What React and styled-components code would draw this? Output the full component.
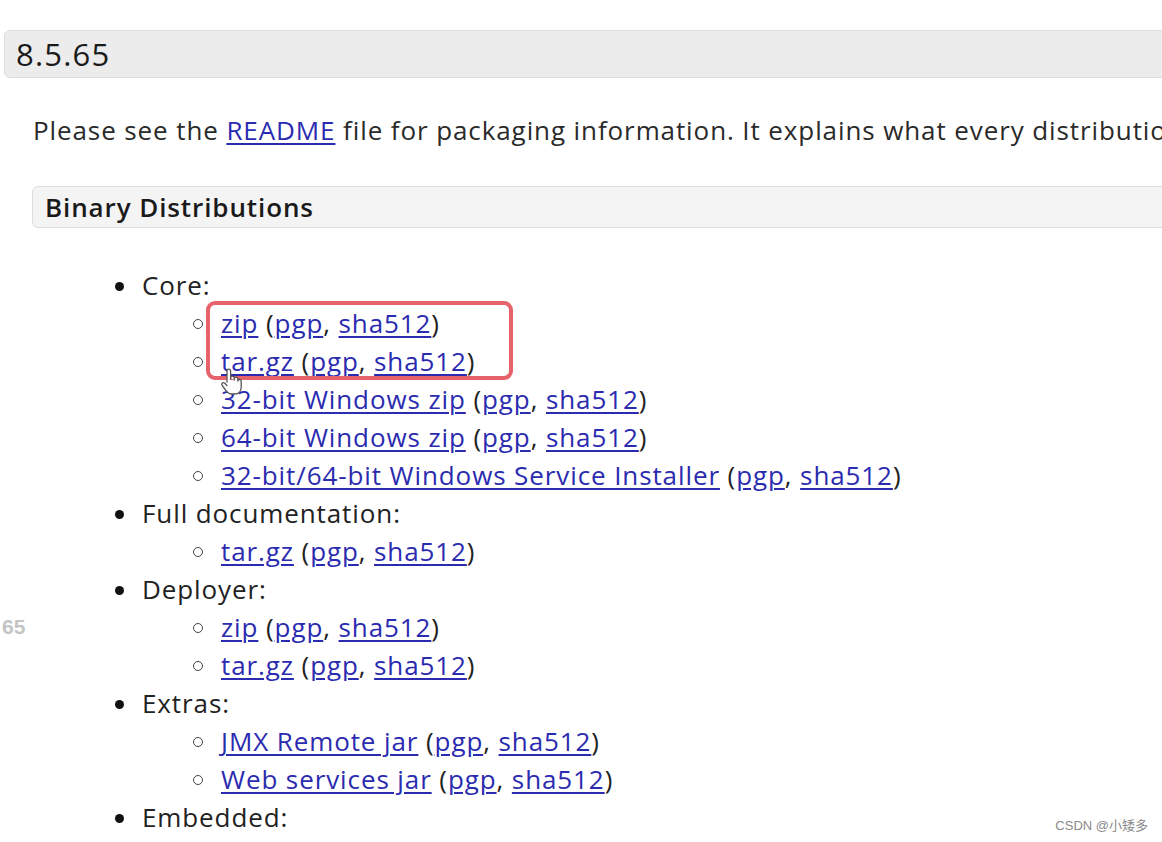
import styled, { createGlobalStyle } from "styled-components";

const GlobalStyle = createGlobalStyle`
  html, body {
    margin: 0;
    padding: 0;
    background: #fff;
    overflow: hidden;
  }
  body {
    font-family: "Open Sans", "Noto Sans", sans-serif;
    color: #222;
  }
`;

const sections = [
  {
    title: "Core:",
    items: [
      { label: "zip" },
      { label: "tar.gz" },
      { label: "32-bit Windows zip" },
      { label: "64-bit Windows zip" },
      { label: "32-bit/64-bit Windows Service Installer" },
    ],
  },
  { title: "Full documentation:", items: [{ label: "tar.gz" }] },
  { title: "Deployer:", items: [{ label: "zip" }, { label: "tar.gz" }] },
  {
    title: "Extras:",
    items: [{ label: "JMX Remote jar" }, { label: "Web services jar" }],
  },
  { title: "Embedded:", items: [] },
];

const HandCursor = () => (
  <svg width="24" height="30" viewBox="0 0 24 30">
    <path
      d="M7 16 V5 a1.8 1.8 0 0 1 3.6 0 V13 M10.6 12 a1.8 1.8 0 0 1 3.6 0 V14 M14.2 13 a1.8 1.8 0 0 1 3.6 0 V15 M17.8 14.5 a1.8 1.8 0 0 1 3.4 0.5 V21 c0 4 -2.5 7 -6.5 7 h-3 c-2.5 0 -4 -1.2 -5.5 -3.2 L2.2 19.5 a1.7 1.7 0 0 1 2.6 -2.2 L7 19.5"
      fill="#fff"
      stroke="#555"
      strokeWidth="1.3"
      strokeLinejoin="round"
      strokeLinecap="round"
    />
  </svg>
);

const App = () => {
  return (
    <>
      <GlobalStyle />
      <Page>
        <VersionBar>8.5.65</VersionBar>
        <Intro>
          Please see the <Link>README</Link> file for packaging information. It
          explains what every distribution contains.
        </Intro>
        <SectionBar>Binary Distributions</SectionBar>
        <List>
          {sections.map((s) => (
            <li key={s.title}>
              <Row $level={1}>
                <Bullet $level={1} />
                <span>{s.title}</span>
              </Row>
              {s.items.map((it, i) => (
                <Row $level={2} key={i}>
                  <Bullet $level={2} />
                  <span>
                    <Link>{it.label}</Link> (<Link>pgp</Link>,{" "}
                    <Link>sha512</Link>)
                  </span>
                </Row>
              ))}
            </li>
          ))}
        </List>
        <Highlight />
        <Cursor>
          <HandCursor />
        </Cursor>
        <SideNumber>65</SideNumber>
        <Watermark>CSDN @小矮多</Watermark>
      </Page>
    </>
  );
};

const Page = styled.div`
  position: relative;
  width: 1162px;
  height: 842px;
  overflow: hidden;
  padding-top: 30px;
  box-sizing: border-box;
  letter-spacing: 0.9px;
`;

const VersionBar = styled.div`
  margin-left: 4px;
  margin-right: -20px;
  height: 48px;
  box-sizing: border-box;
  display: flex;
  align-items: center;
  padding-left: 11px;
  background: #ececec;
  border: 1px solid #dcdcdc;
  border-radius: 6px;
  font-size: 31px;
  font-weight: 500;
  letter-spacing: 1.2px;
  color: #1a1a1a;
`;

const Intro = styled.p`
  margin: 0;
  margin-top: 32px;
  padding-left: 33px;
  font-size: 26px;
  line-height: 40px;
  white-space: nowrap;
  color: #2a2a2a;
`;

const Link = styled.a`
  color: #2b2bb0;
  text-decoration: underline;
  text-decoration-thickness: 1.5px;
  text-underline-offset: 3px;
  cursor: pointer;
`;

const SectionBar = styled.div`
  margin-top: 36px;
  margin-left: 32px;
  margin-right: -20px;
  height: 42px;
  box-sizing: border-box;
  display: flex;
  align-items: center;
  padding-left: 12px;
  background: #f4f4f4;
  border: 1px solid #dcdcdc;
  border-radius: 6px;
  font-size: 26px;
  font-weight: 600;
  color: #1a1a1a;
`;

const List = styled.ul`
  list-style: none;
  margin: 38px 0 0;
  padding: 0;
`;

const Row = styled.div`
  display: flex;
  align-items: center;
  height: 38px;
  gap: 18px;
  padding-left: ${(p) => (p.$level === 1 ? "115px" : "193px")};
  font-size: 26px;
  white-space: nowrap;
  color: #222;
`;

const Bullet = styled.span`
  flex: none;
  box-sizing: border-box;
  width: ${(p) => (p.$level === 1 ? "9px" : "10px")};
  height: ${(p) => (p.$level === 1 ? "9px" : "10px")};
  border-radius: 50%;
  background: ${(p) => (p.$level === 1 ? "#111" : "transparent")};
  border: ${(p) => (p.$level === 1 ? "none" : "1.5px solid #444")};
  margin-top: 2px;
`;

const Highlight = styled.div`
  position: absolute;
  left: 206px;
  top: 301px;
  width: 307px;
  height: 79px;
  box-sizing: border-box;
  border: 4px solid #e6636b;
  border-radius: 9px;
  pointer-events: none;
`;

const Cursor = styled.div`
  position: absolute;
  left: 220px;
  top: 366px;
`;

const SideNumber = styled.div`
  position: absolute;
  left: 2px;
  top: 615px;
  font-family: "Liberation Sans", Arial, sans-serif;
  font-weight: 700;
  font-size: 21px;
  letter-spacing: 0;
  color: #c4c4c4;
`;

const Watermark = styled.div`
  position: absolute;
  right: 14px;
  bottom: 8px;
  font-family: "Liberation Sans", "Noto Sans CJK SC", sans-serif;
  font-size: 13px;
  letter-spacing: 0;
  color: #8a8a8a;
`;

export default App;
